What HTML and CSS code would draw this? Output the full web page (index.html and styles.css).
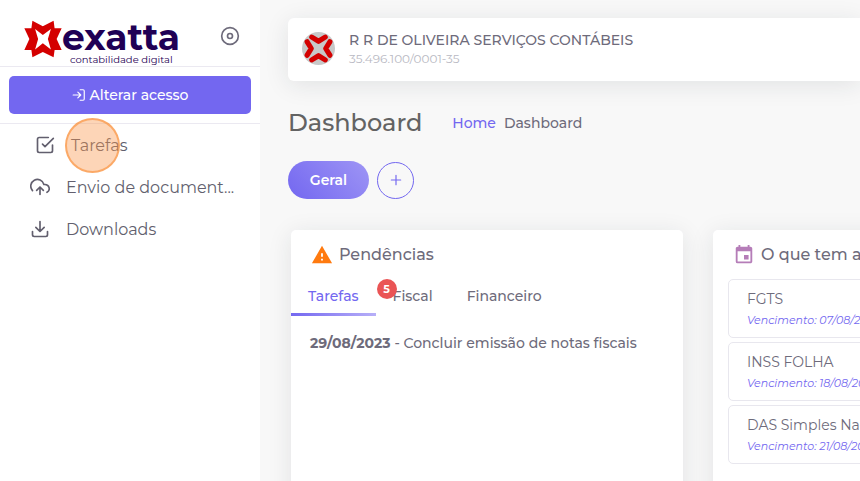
FILE: index.html
```html
<!DOCTYPE html>
<html lang="pt-BR">
<head>
    <meta charset="UTF-8">
    <meta name="viewport" content="width=device-width, initial-scale=1.0">
    <title>Exatta - Dashboard</title>
    <link rel="stylesheet" href="styles.css">
</head>
<body>

    <aside class="sidebar">
        <div class="sidebar-header">
            <a href="#" class="logo">
                <svg class="logo-mark" viewBox="72 62 113 110" aria-hidden="true">
                    <path fill="#d40000" fill-rule="evenodd" d="M97 63L128 79L160 63L163 85H184L169 117L184 150H163L160 171L128 156L97 171L94 150H73L88 117L73 85H94ZM105 87L128 105L152 87L143 117L152 148L128 130L105 148L114 117Z"/>
                </svg>
                <span class="logo-text">
                    <span class="logo-name">exatta</span>
                    <span class="logo-tagline">contabilidade digital</span>
                </span>
            </a>
            <button type="button" class="menu-toggle" aria-label="Fixar menu">
                <svg class="icon" viewBox="0 0 24 24"><circle cx="12" cy="12" r="10"/><circle cx="12" cy="12" r="3"/></svg>
            </button>
        </div>

        <div class="access">
            <button type="button" class="access-button">
                <svg class="icon" viewBox="0 0 24 24"><path d="M14 3h5a2 2 0 0 1 2 2v14a2 2 0 0 1-2 2h-5M10 17l5-5-5-5M15 12H2"/></svg>
                Alterar acesso
            </button>
        </div>

        <nav class="menu">
            <a href="#" class="menu-item active">
                <svg class="icon" viewBox="0 0 24 24"><path d="M9 11l3 3L22 4M21 12v7a2 2 0 0 1-2 2H5a2 2 0 0 1-2-2V5a2 2 0 0 1 2-2h11"/></svg>
                <span>Tarefas</span>
            </a>
            <a href="#" class="menu-item">
                <svg class="icon" viewBox="0 0 24 24"><path d="M16 16l-4-4-4 4M12 12v9M20.4 18.4A5 5 0 0 0 18 9h-1.300A8 8 0 1 0 3 16.300"/></svg>
                <span>Envio de document...</span>
            </a>
            <a href="#" class="menu-item">
                <svg class="icon" viewBox="0 0 24 24"><path d="M21 15v4a2 2 0 0 1-2 2H5a2 2 0 0 1-2-2v-4M7 10l5 5 5-5M12 15V3"/></svg>
                <span>Downloads</span>
            </a>
            <span class="click-marker"></span>
        </nav>
    </aside>

    <main class="content">
        <header class="company">
            <svg class="avatar" viewBox="0 0 32 32" aria-hidden="true">
                <circle cx="16" cy="16" r="16" fill="#c8c8c8"/>
                <path fill="none" stroke="#d40000" stroke-width="5" stroke-linecap="round" stroke-linejoin="round" d="M9.500 5L16 9L22.500 5M9.500 27L16 23L22.500 27M5 9.500L9 16L5 22.500M27 9.500L23 16L27 22.500"/>
            </svg>
            <div>
                <p class="company-name">R R DE OLIVEIRA SERVIÇOS CONTÁBEIS</p>
                <p class="company-id">35.496.100/0001-35</p>
            </div>
        </header>

        <div class="page-title">
            <h1>Dashboard</h1>
            <nav class="breadcrumb">
                <a href="#">Home</a>
                <span>Dashboard</span>
            </nav>
        </div>

        <div class="boards">
            <button type="button" class="board-button">Geral</button>
            <button type="button" class="add-button" aria-label="Adicionar">
                <svg class="icon" viewBox="0 0 24 24"><path d="M12 4v16M4 12h16"/></svg>
            </button>
        </div>

        <div class="cards">
            <section class="card">
                <h2>
                    <svg class="title-icon" viewBox="0 0 24 24"><path fill="#ff7a0f" d="M1 21h22L12 2 1 21zm12-3h-2v-2h2v2zm0-4h-2v-4h2v4z"/></svg>
                    Pendências
                </h2>
                <div class="tabs">
                    <button type="button" class="tab active">Tarefas <span class="badge">5</span></button>
                    <button type="button" class="tab">Fiscal</button>
                    <button type="button" class="tab">Financeiro</button>
                </div>
                <p class="task"><strong>29/08/2023</strong> - Concluir emissão de notas fiscais</p>
            </section>

            <section class="card">
                <h2>
                    <svg class="title-icon" viewBox="0 0 24 24"><path fill="#b57db8" d="M17 12h-5v5h5v-5zM16 1v2H8V1H6v2H5c-1.100 0-2 .9-2 2v14a2 2 0 0 0 2 2h14c1.100 0 2-.9 2-2V5c0-1.100-.9-2-2-2h-1V1h-2zm3 18H5V8h14v11z"/></svg>
                    O que tem a vencer
                </h2>
                <ul class="due-list">
                    <li>
                        <p class="due-name">FGTS</p>
                        <p class="due-date">Vencimento: 07/08/2023</p>
                    </li>
                    <li>
                        <p class="due-name">INSS FOLHA</p>
                        <p class="due-date">Vencimento: 18/08/2023</p>
                    </li>
                    <li>
                        <p class="due-name">DAS Simples Nacional</p>
                        <p class="due-date">Vencimento: 21/08/2023</p>
                    </li>
                </ul>
            </section>
        </div>
    </main>

</body>
</html>
```

FILE: styles.css
```css
* {
    margin: 0;
    padding: 0;
    box-sizing: border-box;
}

body {
    font-family: Montserrat, Inter, sans-serif;
    font-size: 14px;
    color: #6e6b7b;
    background-color: #f8f8f8;
    display: flex;
    height: 100vh;
    overflow: hidden;
}

a {
    color: inherit;
    text-decoration: none;
}

button {
    font: inherit;
    color: inherit;
    border: none;
    background: none;
    cursor: pointer;
}

.icon {
    width: 20px;
    height: 20px;
    flex: none;
    fill: none;
    stroke: currentColor;
    stroke-width: 2;
    stroke-linecap: round;
    stroke-linejoin: round;
}

/* Sidebar */
.sidebar {
    width: 260px;
    flex: none;
    background-color: #fff;
}

.sidebar-header {
    display: flex;
    justify-content: space-between;
    align-items: flex-start;
    height: 67px;
    padding: 20px 20px 0 24px;
    border-bottom: 1px solid #ebe9f1;
}

.logo {
    display: flex;
    color: #1f0055;
}

.logo-mark {
    width: 38px;
    height: 38px;
}

.logo-name {
    display: block;
    font-size: 36px;
    font-weight: 700;
    line-height: 34px;
}

.logo-tagline {
    display: block;
    padding-left: 8px;
    font-size: 10px;
    line-height: 12px;
}

.menu-toggle {
    height: 20px;
    margin-top: 6px;
}

.access {
    padding: 9px;
    border-bottom: 1px solid #ebe9f1;
}

.access-button {
    display: flex;
    justify-content: center;
    align-items: center;
    gap: 4px;
    width: 100%;
    height: 38px;
    border-radius: 5px;
    background-color: #7367f0;
    color: #fff;
    font-size: 14px;
    font-weight: 500;
}

.access-button .icon {
    width: 14px;
    height: 14px;
}

.menu {
    position: relative;
}

.menu-item {
    display: flex;
    align-items: center;
    gap: 16px;
    height: 42px;
    padding-left: 30px;
    font-size: 16px;
    color: #625f6e;
}

.menu-item.active {
    padding-left: 35px;
}

.click-marker {
    position: absolute;
    top: -6px;
    left: 65px;
    width: 55px;
    height: 55px;
    border: 2px solid rgba(250, 140, 50, 0.6);
    border-radius: 50%;
    background-color: rgba(250, 150, 75, 0.4);
}

/* Content */
.content {
    flex: 1;
    min-width: 0;
    padding: 18px 0 0 28px;
}

.company {
    display: flex;
    align-items: center;
    gap: 14px;
    height: 63px;
    padding: 0 0 2px 14px;
    border-radius: 6px 0 0 6px;
    background-color: #fff;
    box-shadow: 0 4px 24px rgba(34, 41, 47, 0.1);
}

.avatar {
    width: 33px;
    height: 33px;
}

.company-name {
    font-size: 14px;
    font-weight: 500;
    line-height: 20px;
}

.company-id {
    font-size: 12px;
    line-height: 18px;
    color: #b9b9c3;
}

.page-title {
    display: flex;
    align-items: center;
    gap: 30px;
    margin-top: 26px;
}

.page-title h1 {
    font-size: 24px;
    font-weight: 500;
    line-height: 32px;
    color: #636363;
}

.breadcrumb {
    display: flex;
    gap: 8px;
    font-weight: 500;
}

.breadcrumb a {
    color: #7367f0;
}

.boards {
    display: flex;
    align-items: center;
    gap: 8px;
    margin-top: 22px;
}

.board-button {
    width: 81px;
    height: 38px;
    border-radius: 19px;
    background: linear-gradient(47deg, #7367f0, #9e95f5);
    color: #fff;
    font-size: 14px;
    font-weight: 600;
}

.add-button {
    display: flex;
    justify-content: center;
    align-items: center;
    width: 37px;
    height: 37px;
    border: 1px solid #7367f0;
    border-radius: 50%;
    color: #7367f0;
}

.add-button .icon {
    width: 14px;
    height: 14px;
}

.cards {
    display: grid;
    grid-template-columns: 392px 392px;
    gap: 30px;
    margin: 31px 0 0 3px;
}

.card {
    min-height: 400px;
    border-radius: 5px;
    background-color: #fff;
    box-shadow: 0 4px 24px rgba(34, 41, 47, 0.1);
}

.card h2 {
    display: flex;
    align-items: center;
    gap: 6px;
    height: 49px;
    padding-left: 20px;
    font-size: 16px;
    font-weight: 500;
}

.title-icon {
    width: 22px;
    height: 22px;
}

.tabs {
    display: flex;
}

.tab {
    position: relative;
    height: 37px;
    padding: 0 17px;
    border-bottom: 3px solid transparent;
    font-size: 14px;
    font-weight: 500;
}

.tab.active {
    border-image: linear-gradient(to right, #7367f0, #b8b0f8) 1;
    color: #7367f0;
}

.badge {
    position: absolute;
    top: 0;
    right: -21px;
    z-index: 1;
    width: 20px;
    height: 20px;
    border-radius: 50%;
    background-color: #ea5455;
    color: #fff;
    font-size: 11px;
    font-weight: 700;
    line-height: 20px;
}

.task {
    padding: 16px 19px;
    font-size: 14px;
    font-weight: 500;
    line-height: 22px;
}

.task strong {
    font-weight: 700;
}

.due-list {
    display: grid;
    gap: 4px;
    padding: 0 15px;
    list-style: none;
}

.due-list li {
    height: 59px;
    padding: 8px 18px;
    border: 1px solid #e8e7ee;
    border-radius: 5px;
}

.due-name {
    font-size: 14px;
    line-height: 22px;
}

.due-date {
    font-size: 11px;
    font-style: italic;
    line-height: 20px;
    color: #7367f0;
}
```
